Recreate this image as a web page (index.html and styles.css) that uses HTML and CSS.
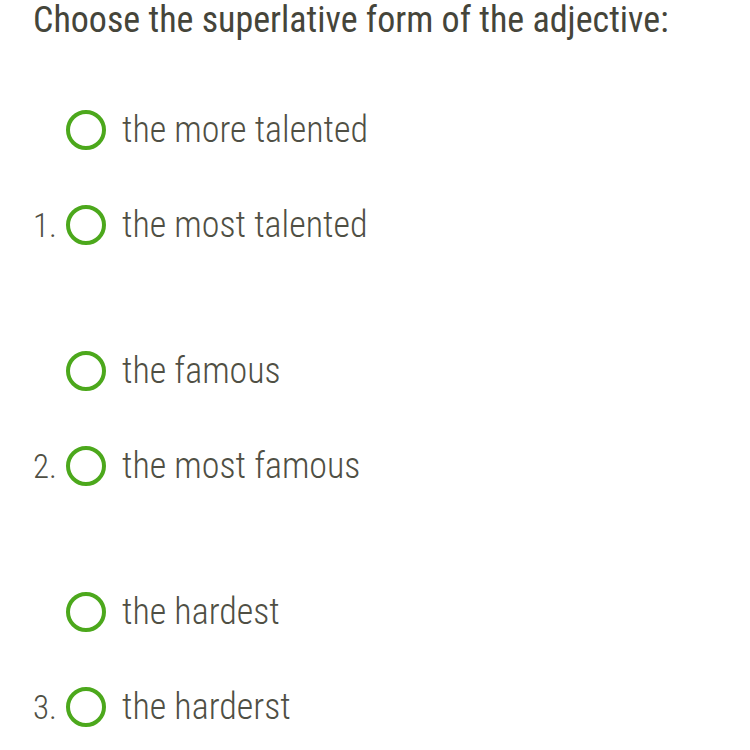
FILE: index.html
```html
<!DOCTYPE html>
<html lang="en">
<head>
  <meta charset="UTF-8">
  <title>Superlative adjectives</title>
  <link rel="stylesheet" href="styles.css">
</head>
<body>
  <h1 class="prompt">Choose the superlative form of the adjective:</h1>
  <ol class="questions">
    <li class="question">
      <div class="option"><span class="num"></span><span class="radio"></span><span class="label">the more talented</span></div>
      <div class="option"><span class="num">1.</span><span class="radio"></span><span class="label">the most talented</span></div>
    </li>
    <li class="question">
      <div class="option"><span class="num"></span><span class="radio"></span><span class="label">the famous</span></div>
      <div class="option"><span class="num">2.</span><span class="radio"></span><span class="label">the most famous</span></div>
    </li>
    <li class="question">
      <div class="option"><span class="num"></span><span class="radio"></span><span class="label">the hardest</span></div>
      <div class="option"><span class="num">3.</span><span class="radio"></span><span class="label">the harderst</span></div>
    </li>
  </ol>
</body>
</html>
```
FILE: styles.css
```css
body {
  margin: 0;
  padding-left: 33px;
  background: #fff;
  font-family: Roboto, "Liberation Sans", sans-serif;
  font-stretch: 85%;
  color: #4f4f44;
}
.prompt {
  margin: 0;
  font-size: 36px;
  line-height: 40px;
  font-weight: 370;
  color: #45453a;
}
.questions {
  list-style: none;
  margin: 66px 0 0;
  padding: 0;
  display: flex;
  flex-direction: column;
  gap: 98px;
}
.question {
  display: flex;
  flex-direction: column;
  gap: 47px;
}
.option {
  display: flex;
  align-items: center;
  height: 48px;
}
.num {
  width: 33px;
  font-size: 33px;
  font-weight: 300;
}
.radio {
  box-sizing: border-box;
  width: 40px;
  height: 40px;
  border: 4px solid #4ca81c;
  border-radius: 50%;
  margin-right: 16px;
}
.label {
  font-size: 36px;
  font-weight: 300;
}
```
